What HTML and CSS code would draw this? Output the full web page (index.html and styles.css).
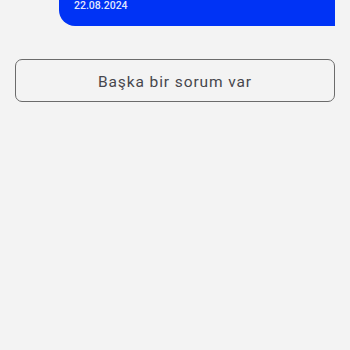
FILE: index.html
```html
<!DOCTYPE html>
<html lang="en">

<head>
    <meta charset="UTF-8">
    <meta name="viewport" content="width=device-width, initial-scale=1.0">
    <title>Sohbet</title>
    <link rel="stylesheet" href="styles.css">
</head>

<body>

    <div class="chat">
        <div class="bubble">
            <span class="bubble-date">22.08.2024</span>
        </div>
        <button class="reply-btn">Başka bir sorum var</button>
    </div>

</body>

</html>
```

FILE: styles.css
```css
* {
    margin: 0;
    padding: 0;
    box-sizing: border-box;
}

body {
    background-color: #f3f3f3;
    font-family: Roboto, "Liberation Sans", sans-serif;
    height: 100vh;
}

.chat {
    display: flex;
    flex-direction: column;
    padding: 0 15px;
}

.bubble {
    margin-left: 44px;
    padding: 0 14px 14px 15px;
    background: #0033f5;
    border-radius: 0 0 0 16px;
}

.bubble-date {
    display: block;
    font-family: Roboto, "Liberation Sans", sans-serif;
    font-size: 10.5px;
    line-height: 12px;
    font-weight: 500;
    color: rgba(255, 255, 255, 0.9);
}

.reply-btn {
    margin-top: 33px;
    height: 43px;
    padding-top: 2px;
    border: 1px solid #6b6b6b;
    border-radius: 7px;
    background: transparent;
    font-family: Roboto, "Liberation Sans", sans-serif;
    font-size: 15.5px;
    font-weight: 400;
    letter-spacing: 0.9px;
    color: #46464c;
}
```
